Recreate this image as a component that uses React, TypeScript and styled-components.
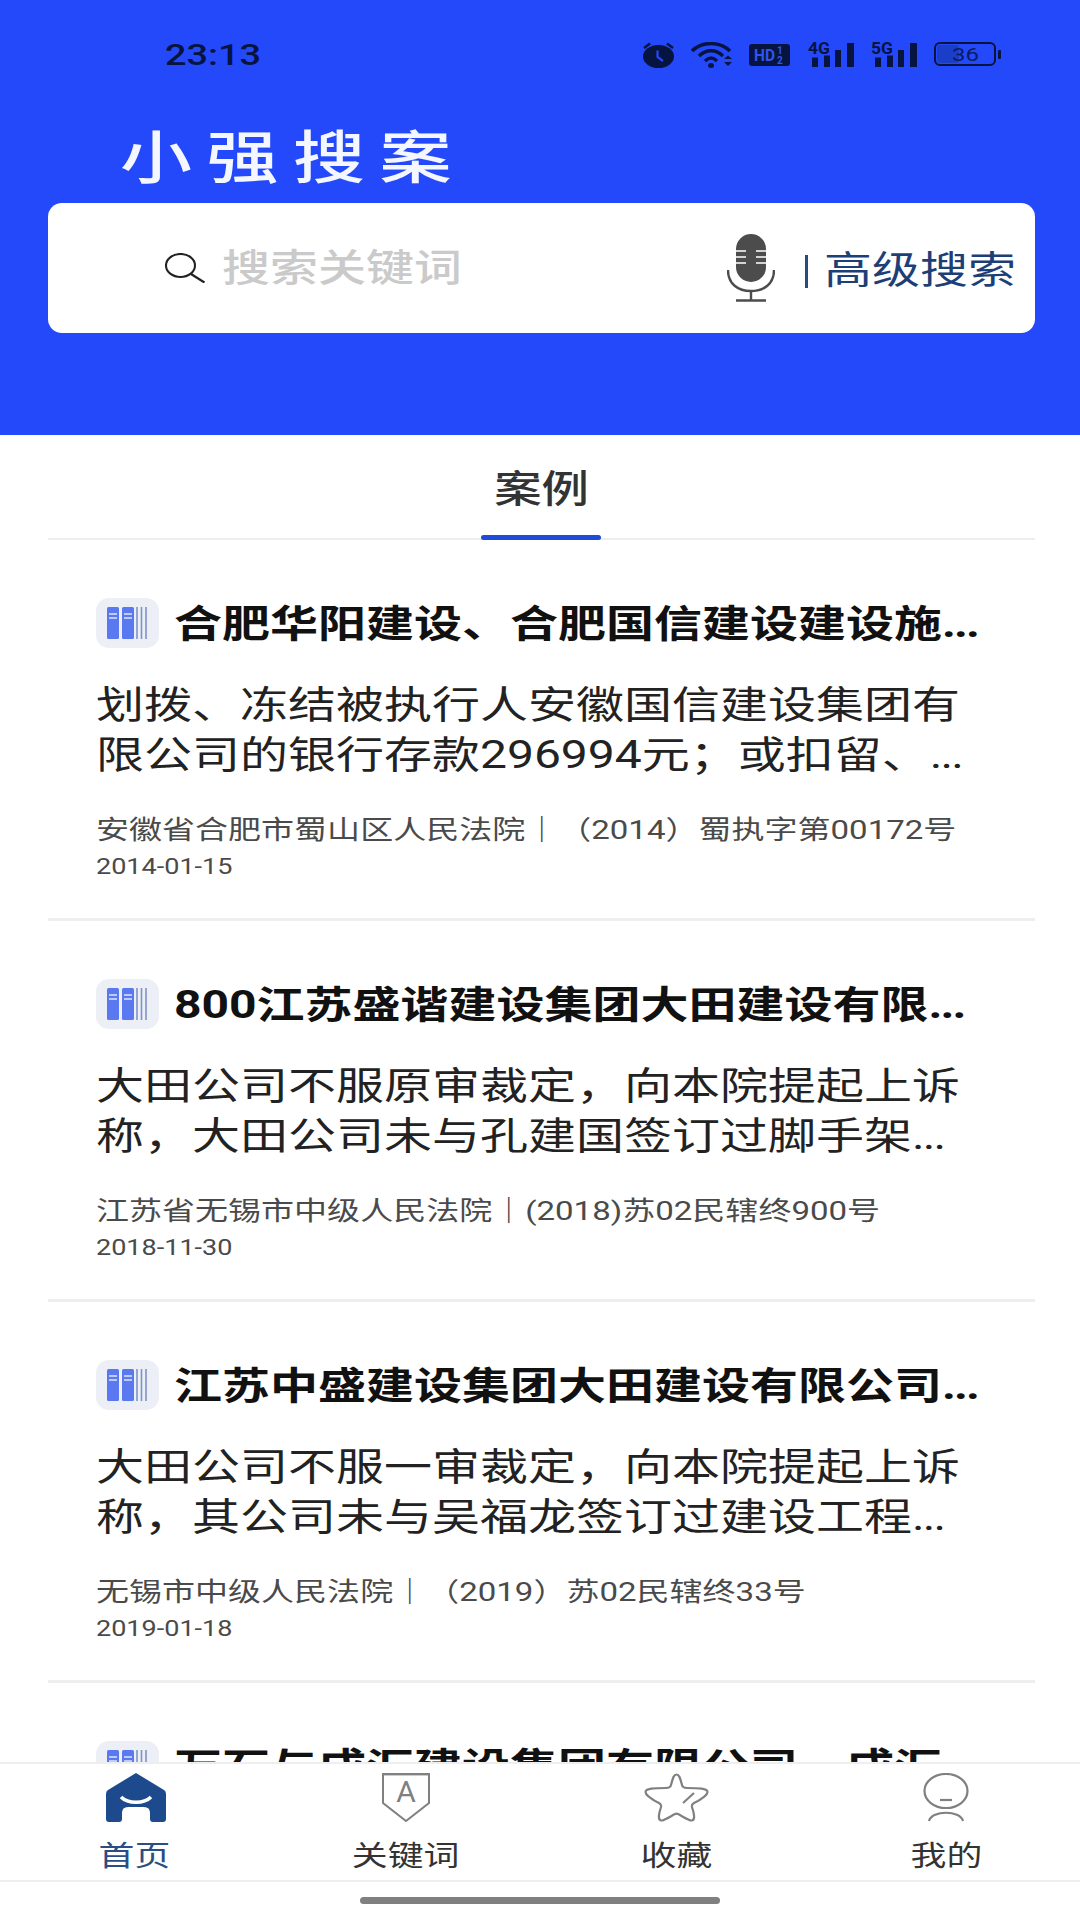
import React from "react";
import styled, { createGlobalStyle, css } from "styled-components";

const STRETCH = 1.263;

const GlobalStyle = createGlobalStyle`
  html, body {
    margin: 0;
    padding: 0;
    background: #ffffff;
    font-family: Roboto, "Noto Sans CJK SC", sans-serif;
  }
`;

const wide = css`
  transform: scaleX(${STRETCH});
  transform-origin: left center;
  white-space: nowrap;
`;

const Page = styled.div`
  position: relative;
  width: 1080px;
  height: 1920px;
  overflow: hidden;
  background: #ffffff;
`;

const Header = styled.header`
  height: 435px;
  background: #2349fa;
  display: flex;
  flex-direction: column;
  box-sizing: border-box;
  padding: 42px 45px 0 48px;
`;

const StatusBar = styled.div`
  height: 26px;
  display: flex;
  align-items: center;
  justify-content: space-between;
  padding: 0 33px 0 117px;
`;

const Time = styled.span`
  ${wide}
  font-size: 30px;
  font-weight: 500;
  line-height: 26px;
  color: #06143f;
  display: block;
`;

const StatusIcons = styled.div`
  display: flex;
  align-items: center;
  height: 26px;
`;

const Brand = styled.h1`
  ${wide}
  margin: 51px 0 0 72px;
  font-size: 57px;
  font-weight: 500;
  line-height: 68px;
  letter-spacing: 11.5px;
  color: #f4f7ff;
  font-family: "Noto Sans CJK SC", sans-serif;
`;

const SearchBox = styled.div`
  margin-top: 16px;
  height: 130px;
  background: #ffffff;
  border-radius: 14px;
  display: flex;
  align-items: center;
  padding: 0 57px 0 117px;
`;

const Placeholder = styled.span`
  ${wide}
  display: block;
  flex: 1;
  margin: 0 0 7px 17px;
  font-size: 38px;
  font-weight: 500;
  color: #cacaca;
  font-family: "Noto Sans CJK SC", sans-serif;
`;

const MicWrap = styled.div`
  display: flex;
  margin-right: 30px;
`;

const Separator = styled.div`
  width: 3px;
  height: 33px;
  background: #2b4a80;
  margin: 6px 16px 0 0;
`;

const Advanced = styled.span`
  ${wide}
  display: block;
  width: 154px;
  margin-bottom: 4px;
  font-size: 38px;
  color: #1d3f77;
  font-family: "Noto Sans CJK SC", sans-serif;
`;

const Tabs = styled.div`
  margin: 0 45px 0 48px;
  height: 105px;
  box-sizing: border-box;
  border-bottom: 2px solid #eeeeee;
  position: relative;
  display: flex;
  justify-content: center;
  align-items: center;
  padding-bottom: 2px;
`;

const TabLabel = styled.span`
  font-size: 37.5px;
  font-weight: 500;
  color: #333333;
  transform: scaleX(${STRETCH});
  font-family: "Noto Sans CJK SC", sans-serif;
`;

const TabMark = styled.div`
  position: absolute;
  left: 433px;
  bottom: -2px;
  width: 120px;
  height: 5px;
  border-radius: 3px;
  background: #1f4bd8;
`;

const List = styled.div`
  padding: 0 45px 0 48px;
`;

const Card = styled.article`
  height: 381px;
  box-sizing: border-box;
  padding: 58px 0 0 48px;
  border-bottom: 3px solid #eeeeee;
`;

const TitleRow = styled.div`
  display: flex;
  align-items: center;
  height: 50px;
`;

const BookBadge = styled.div`
  flex: none;
  width: 63px;
  height: 50px;
  border-radius: 13px;
  background: #eceff6;
  display: flex;
  align-items: center;
  justify-content: center;
`;

const Title = styled.h2`
  ${wide}
  margin: 2px 0 0 15px;
  font-size: 38px;
  font-weight: 700;
  line-height: 50px;
  color: #111111;
  font-family: Roboto, "Noto Sans CJK SC", sans-serif;
`;

const Dots = styled.span`
  letter-spacing: -1.5px;
`;

const Body = styled.p`
  ${wide}
  margin: 32px 0 0;
  font-size: 38px;
  line-height: 50px;
  color: #222222;
`;

const Meta = styled.div`
  ${wide}
  margin-top: 30px;
  font-size: 26.15px;
  line-height: 40px;
  color: #4a4a4a;
`;

const DateText = styled.div`
  ${wide}
  margin-top: 3px;
  font-size: 21.4px;
  line-height: 28px;
  color: #4a4a4a;
`;

const BottomBar = styled.nav`
  position: absolute;
  left: 0;
  right: 0;
  top: 1762px;
  bottom: 0;
  background: #ffffff;
  border-top: 2px solid #eeeeee;
  box-sizing: border-box;
`;

const NavRow = styled.div`
  height: 118px;
  box-sizing: border-box;
  border-bottom: 2px solid #eeeeee;
  padding-left: 1px;
  display: grid;
  grid-template-columns: repeat(4, 270px);
`;

const NavItem = styled.div`
  display: flex;
  flex-direction: column;
  align-items: center;
  padding-top: 9px;
`;

const NavIcon = styled.div`
  height: 49px;
  display: flex;
  align-items: center;
`;

const NavLabel = styled.span<{ $active?: boolean }>`
  margin-top: 15px;
  margin-right: ${(p) => (p.$active ? "4px" : "0")};
  font-size: 28.4px;
  line-height: 34px;
  color: ${(p) => (p.$active ? "#2b4c85" : "#333333")};
  transform: scaleX(${STRETCH});
  font-family: "Noto Sans CJK SC", sans-serif;
`;

const HomeZone = styled.div`
  display: flex;
  justify-content: center;
  padding-top: 15px;
`;

const HomeBar = styled.div`
  width: 360px;
  height: 7px;
  border-radius: 4px;
  background: #808080;
`;

const ink = "#06143f";

const AlarmIcon = () => (
  <svg width="33" height="26" viewBox="0 0 33 26" style={{ marginRight: 16 }}>
    <ellipse cx="16.5" cy="14.5" rx="15.5" ry="11.5" fill={ink} />
    <path d="M2 6 L8 1.5 M31 6 L25 1.5" stroke={ink} strokeWidth="2.5" />
    <path d="M15.5 8.5 V15 L21 19" stroke="#2349fa" strokeWidth="2.2" fill="none" />
  </svg>
);

const WifiIcon = () => (
  <svg width="44" height="26" viewBox="0 0 44 26" style={{ marginRight: 14 }}>
    <g fill="none" stroke={ink} strokeWidth="3.4">
      <path d="M1 9 C11 -1 29 -1 39 9" />
      <path d="M8 14 C15 7 25 7 32 14" />
      <path d="M14 19 C18 15 22 15 26 19" />
    </g>
    <ellipse cx="20" cy="23.5" rx="3" ry="2.5" fill={ink} />
    <path d="M33 17 L37 13.5 L41 17 Z M33 20 L37 24 L41 20 Z" fill={ink} />
  </svg>
);

const HdIcon = () => (
  <svg width="41" height="22" viewBox="0 0 41 22" style={{ marginRight: 18 }}>
    <rect width="41" height="22" rx="3" fill={ink} />
    <text x="5" y="17" fontSize="16" fontWeight="700" fontFamily="Roboto, sans-serif" fill="#2f55f0" textLength="21" lengthAdjust="spacingAndGlyphs">HD</text>
    <text x="28" y="10" fontSize="10" fontWeight="700" fontFamily="Roboto, sans-serif" fill="#2f55f0">1</text>
    <text x="28" y="20" fontSize="10" fontWeight="700" fontFamily="Roboto, sans-serif" fill="#2f55f0">2</text>
  </svg>
);

const SignalIcon = ({ label, gap }: { label: string; gap: number }) => (
  <svg width="47" height="30" viewBox="0 -4 47 30" style={{ marginRight: gap, marginBottom: 4 }}>
    <text x="0" y="12" fontSize="16" fontWeight="700" fontFamily="Roboto, sans-serif" fill={ink} textLength="22" lengthAdjust="spacingAndGlyphs">{label}</text>
    <rect x="4" y="15.5" width="6" height="9.5" fill={ink} />
    <rect x="16" y="13.5" width="6" height="11.5" fill={ink} />
    <rect x="27" y="8" width="6" height="17" fill={ink} />
    <rect x="39" y="1" width="7" height="24" fill={ink} />
  </svg>
);

const BatteryIcon = () => (
  <svg width="68" height="26" viewBox="0 0 68 26">
    <rect x="1" y="1" width="60" height="22" rx="5" fill="none" stroke={ink} strokeWidth="2" />
    <rect x="3" y="3" width="22" height="18" rx="3" fill="#1b3ec9" />
    <rect x="64" y="8" width="3" height="9" rx="1" fill={ink} />
    <text x="18" y="19" fontSize="19" fontFamily="Roboto, sans-serif" fill="#0a1c5e" textLength="27" lengthAdjust="spacingAndGlyphs">36</text>
  </svg>
);

const SearchIcon = () => (
  <svg width="40" height="30" viewBox="0 0 40 30">
    <ellipse cx="15.5" cy="12.5" rx="14.5" ry="11.5" fill="none" stroke="#222" strokeWidth="2.1" />
    <path d="M26 21 L39.5 29.5" stroke="#222" strokeWidth="2.3" />
  </svg>
);

const MicIcon = () => (
  <svg width="48" height="68" viewBox="0 0 48 68">
    <rect x="9" y="0" width="30" height="48" rx="15" fill="#4c4c4c" />
    <path d="M9 17 H19 M29 17 H39 M9 23 H19 M29 23 H39 M9 29 H19 M29 29 H39" stroke="#fff" strokeWidth="1.5" />
    <path d="M1 36 C1 50 11 57 24 57 C37 57 47 50 47 36" fill="none" stroke="#4c4c4c" strokeWidth="2.4" />
    <path d="M24 57 V66 M9 66.5 H39" stroke="#4c4c4c" strokeWidth="2.4" />
  </svg>
);

const BookIcon = () => (
  <svg width="41" height="32" viewBox="0 0 41 32">
    <rect x="0" y="0" width="12" height="32" rx="1.5" fill="#5a78ef" />
    <rect x="15" y="0" width="12" height="32" rx="1.5" fill="#5a78ef" />
    <path d="M2 7 H10 M2 11 H10 M17 7 H25 M17 11 H25" stroke="#dfe6fb" strokeWidth="1.6" />
    <path d="M30 0 V32 M34.5 0 V32 M39 0 V32" stroke="#7f93c6" strokeWidth="1.6" />
  </svg>
);

const HomeIcon = () => (
  <svg width="60" height="49" viewBox="0 0 60 49">
    <path
      d="M30 0 L58 17 Q60 18 60 21 V46 Q60 49 57 49 H47 Q44 49 44 46 V40 Q44 34 38 34 H22 Q16 34 16 40 V46 Q16 49 13 49 H3 Q0 49 0 46 V21 Q0 18 2 17 Z"
      fill="#1d4a8c"
    />
    <path d="M15 24 C22 31 38 31 45 24" fill="none" stroke="#fff" strokeWidth="3.6" />
  </svg>
);

const KeywordIcon = () => (
  <svg width="48" height="49" viewBox="0 0 48 49">
    <path d="M1 1 H47 V30 L24 48 L1 30 Z" fill="none" stroke="#808080" strokeWidth="2" />
    <rect x="1" y="0" width="46" height="2.4" fill="#808080" />
    <text x="24" y="29" textAnchor="middle" fontSize="30" fontFamily="Roboto, sans-serif" fill="#808080">A</text>
  </svg>
);

const StarIcon = () => (
  <svg width="65" height="49" viewBox="0 0 65 49">
    <path
      d="M32.5 1.5 C35 1.5 36 4 38 12 C38.5 14 40 15 43 15 C55 15 63.5 15 63.5 19 C63.5 22 56 27 50 30 C48 31 47.5 32 48 34 C50 40 51.5 47 48 47.5 C45 48 38 43 34 41 C33 40.5 32 40.5 31 41 C27 43 20 48 17 47.5 C13.5 47 15 40 17 34 C17.5 32 17 31 15 30 C9 27 1.5 22 1.5 19 C1.5 15 10 15 22 15 C25 15 26.5 14 27 12 C29 4 30 1.5 32.5 1.5 Z"
      fill="none"
      stroke="#808080"
      strokeWidth="2.2"
    />
    <path d="M39 30 L50 20" stroke="#808080" strokeWidth="2.2" />
  </svg>
);

const MeIcon = () => (
  <svg width="46" height="49" viewBox="0 0 46 49">
    <ellipse cx="23" cy="18" rx="21.5" ry="17" fill="none" stroke="#808080" strokeWidth="2.2" />
    <path d="M17 27 H29" stroke="#808080" strokeWidth="2.2" />
    <path d="M6 48 C9 37 37 37 40 48" fill="none" stroke="#808080" strokeWidth="2.2" />
  </svg>
);

const cases = [
  {
    title: "合肥华阳建设、合肥国信建设建设施...",
    lines: ["划拨、冻结被执行人安徽国信建设集团有", "限公司的银行存款296994元；或扣留、..."],
    meta: "安徽省合肥市蜀山区人民法院｜（2014）蜀执字第00172号",
    date: "2014-01-15",
  },
  {
    title: "800江苏盛谐建设集团大田建设有限...",
    lines: ["大田公司不服原审裁定，向本院提起上诉", "称，大田公司未与孔建国签订过脚手架..."],
    meta: "江苏省无锡市中级人民法院｜(2018)苏02民辖终900号",
    date: "2018-11-30",
  },
  {
    title: "江苏中盛建设集团大田建设有限公司...",
    lines: ["大田公司不服一审裁定，向本院提起上诉", "称，其公司未与吴福龙签订过建设工程..."],
    meta: "无锡市中级人民法院｜（2019）苏02民辖终33号",
    date: "2019-01-18",
  },
  {
    title: "万石与成汇建设集团有限公司、成汇",
    lines: [],
    meta: "",
    date: "",
  },
];

const navItems = [
  { label: "首页", icon: <HomeIcon />, active: true },
  { label: "关键词", icon: <KeywordIcon /> },
  { label: "收藏", icon: <StarIcon /> },
  { label: "我的", icon: <MeIcon /> },
];

const clip = (text: string) =>
  text.endsWith("...") ? (
    <>
      {text.slice(0, -3)}
      <Dots>...</Dots>
    </>
  ) : (
    text
  );

const App: React.FC = () => {
  return (
    <Page>
      <GlobalStyle />
      <Header>
        <StatusBar>
          <Time>23:13</Time>
          <StatusIcons>
            <AlarmIcon />
            <WifiIcon />
            <HdIcon />
            <SignalIcon label="4G" gap={16} />
            <SignalIcon label="5G" gap={16} />
            <BatteryIcon />
          </StatusIcons>
        </StatusBar>
        <Brand>小强搜案</Brand>
        <SearchBox>
          <SearchIcon />
          <Placeholder>搜索关键词</Placeholder>
          <MicWrap>
            <MicIcon />
          </MicWrap>
          <Separator />
          <Advanced>高级搜索</Advanced>
        </SearchBox>
      </Header>

      <Tabs>
        <TabLabel>案例</TabLabel>
        <TabMark />
      </Tabs>

      <List>
        {cases.map((c) => (
          <Card key={c.title}>
            <TitleRow>
              <BookBadge>
                <BookIcon />
              </BookBadge>
              <Title>{clip(c.title)}</Title>
            </TitleRow>
            <Body>
              {c.lines.map((line) => (
                <React.Fragment key={line}>
                  {clip(line)}
                  <br />
                </React.Fragment>
              ))}
            </Body>
            <Meta>{c.meta}</Meta>
            <DateText>{c.date}</DateText>
          </Card>
        ))}
      </List>

      <BottomBar>
        <NavRow>
          {navItems.map((item) => (
            <NavItem key={item.label}>
              <NavIcon>{item.icon}</NavIcon>
              <NavLabel $active={item.active}>{item.label}</NavLabel>
            </NavItem>
          ))}
        </NavRow>
        <HomeZone>
          <HomeBar />
        </HomeZone>
      </BottomBar>
    </Page>
  );
};

export default App;
